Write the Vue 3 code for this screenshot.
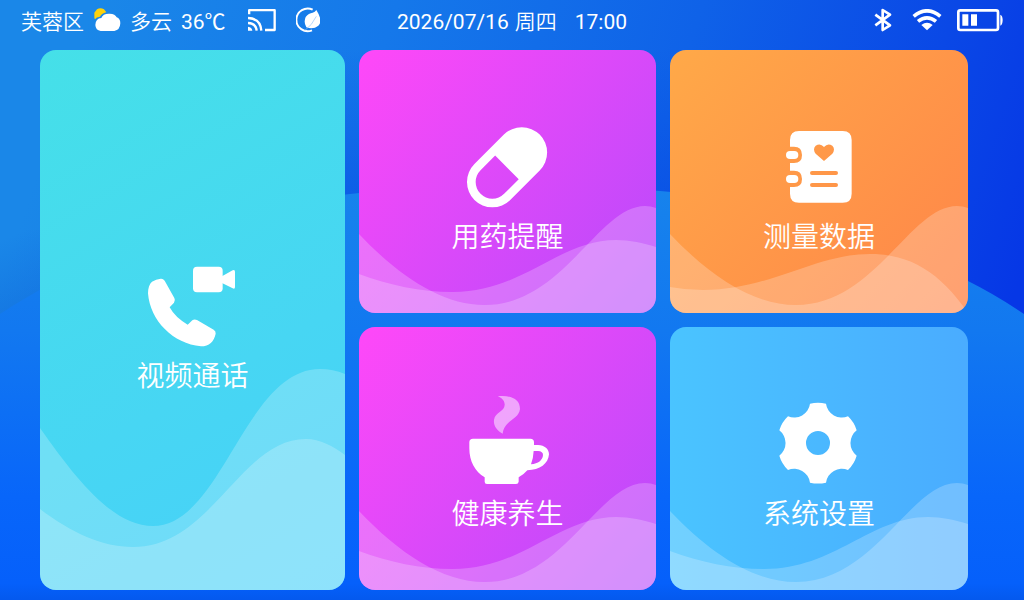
<script setup>
const steep = 'M0 184 C40 226 83 255 126 255 C205 255 240 156 287 156 Q293 156 298 158 V263 H0Z'
const shallow = 'M0 224 C30 235 62 242 94 242 C165 242 200 190 258 190 C272 190 285 193 298 197 V263 H0Z'

const cards = [
  {
    id: 'call',
    label: '视频通话',
    icon: '51 -14 333 333',
    size: '0 0 305 540',
    waves: [
      'M0 378 C40 435 75 476 113 476 C182 476 205 319 280 319 Q293 319 305 324 V540 H0Z',
      'M0 459 C32 483 62 497 93 497 C172 497 200 389 266 389 C280 389 293 396 305 405 V540 H0Z',
    ],
  },
  { id: 'medicine', label: '用药提醒', icon: '66 -11 333 333', size: '0 0 298 263', waves: [steep, shallow] },
  {
    id: 'data',
    label: '测量数据',
    icon: '42 -9 333 333',
    size: '0 0 298 263',
    waves: [steep, 'M0 237 Q16 240 33 240 C100 240 145 204 200 204 C240 204 270 222 298 263 H0Z'],
  },
  { id: 'health', label: '健康养生', icon: '66 -3 333 333', size: '0 0 298 263', waves: [steep, shallow] },
  { id: 'settings', label: '系统设置', icon: '42 -3 333 333', size: '0 0 298 263', waves: [steep, shallow] },
]
</script>

<template>
  <div class="screen">
    <svg class="backdrop" viewBox="0 0 1024 600" preserveAspectRatio="none" aria-hidden="true">
      <defs>
        <linearGradient id="sky" gradientUnits="userSpaceOnUse" x1="80" y1="40" x2="1000" y2="340">
          <stop offset="0" stop-color="#1a87e8" />
          <stop offset="0.3" stop-color="#1578ea" />
          <stop offset="0.6" stop-color="#0f62e8" />
          <stop offset="0.85" stop-color="#0a48e6" />
          <stop offset="1" stop-color="#0637e6" />
        </linearGradient>
        <linearGradient id="hill" x1="0" y1="0" x2="0" y2="1">
          <stop offset="0" stop-color="#1783ec" />
          <stop offset="0.35" stop-color="#1278f0" />
          <stop offset="0.75" stop-color="#0866fa" />
          <stop offset="0.96" stop-color="#0560fb" />
          <stop offset="1" stop-color="#0459ee" />
        </linearGradient>
        <linearGradient id="shade" gradientUnits="userSpaceOnUse" x1="0" y1="240" x2="30" y2="315">
          <stop offset="0" stop-color="#0d5fd8" stop-opacity="0" />
          <stop offset="1" stop-color="#0d5fd8" stop-opacity="0.4" />
        </linearGradient>
        <linearGradient id="dip" x1="0" y1="0" x2="0" y2="1">
          <stop offset="0" stop-color="#084ce4" stop-opacity="0" />
          <stop offset="1" stop-color="#084ce4" stop-opacity="0.6" />
        </linearGradient>
      </defs>
      <rect width="1024" height="600" fill="url(#sky)" />
      <path d="M0 230 H345 V320 H0Z" fill="url(#shade)" />
      <path d="M300 50 H700 V200 H300Z" fill="url(#dip)" />
      <path d="M0 314 C120 236 240 205 350 194 C450 184 570 184 660 191 C780 200 860 222 968 281 Q996 295 1024 314 V600 H0Z" fill="url(#hill)" />
    </svg>

    <header class="status">
      <div class="group left">
        <span class="han">芙蓉区</span>
        <svg class="cloud" width="27" height="24" viewBox="281 24 81 72" aria-hidden="true">
          <path d="M282 54V38L290 28Q300 21 311 28L318 37Q303 41 299 50Q288 51 284 58Z" fill="#fdd20a" />
          <path d="M301 93Q286 91 285 75Q286 55 303 54Q308 40 328 41Q345 42 349 52Q360 56 360 70Q359 90 342 93Z" fill="#fff" />
        </svg>
        <span class="han">多云</span>
        <span class="temp">36℃</span>
        <svg class="cast" width="28" height="24" viewBox="744 25 84 72" fill="none" stroke="#fff" stroke-width="7" aria-hidden="true">
          <path d="M747.500 44V31.500H824V91H795M744 55Q782 57 784 93M744 70Q768 71 770 93" stroke-linejoin="round" />
          <path d="M744 81Q756 83 757 93H744Z" fill="#fff" stroke="none" />
        </svg>
        <svg class="eco" width="24" height="26" viewBox="888 22 72 78" fill="none" stroke="#fff" aria-hidden="true">
          <path d="M938 30A34 34 0 1 0 936 92" stroke-width="6" />
          <path d="M949 31Q970 64 955 78Q940 90 919 83Q910 68 917 52Q926 40 938 39Q945 38 949 31Z" fill="#fff" stroke="none" />
          <path d="M914 93Q936 77 949 50" stroke="#8fc0f8" stroke-width="2" />
        </svg>
      </div>
      <time class="clock" datetime="2026-07-16T17:00">
        <span>2026/07/16</span>
        <span class="han weekday">周四</span>
        <span>17:00</span>
      </time>
      <div class="group right">
        <svg width="20" height="26" viewBox="69 21 60 78" fill="none" stroke="#fff" stroke-width="8" aria-hidden="true">
          <path d="M76 44L120 76L98 90V30L120 44L76 76" stroke-linejoin="round" />
        </svg>
        <svg class="wifi" width="30" height="22" viewBox="186 27 90 66" fill="none" stroke="#fff" stroke-width="11" aria-hidden="true">
          <path d="M191 49Q231 16 271 49M204 64Q231 43 258 64" />
          <path d="M214 75Q231 61 248 75L231 91Z" fill="#fff" stroke="none" />
        </svg>
        <svg class="battery" width="46" height="24" viewBox="321 24 138 72" fill="none" stroke="#fff" aria-hidden="true">
          <rect x="325" y="31" width="119" height="59" rx="6" stroke-width="8" />
          <path d="M337 43H355V77H337ZM363 43H381V77H363Z" fill="#fff" stroke="none" />
          <path d="M451 44Q458 47 458 60Q458 74 451 77Z" fill="#fff" stroke="none" />
        </svg>
      </div>
    </header>

    <main class="tiles">
      <button v-for="card in cards" :key="card.id" type="button" class="tile" :class="card.id">
        <svg class="waves" :viewBox="card.size" preserveAspectRatio="none" aria-hidden="true">
          <path v-for="(wave, i) in card.waves" :key="i" :d="wave" />
        </svg>
        <svg class="icon" :viewBox="card.icon" fill="#fff" aria-hidden="true">
          <template v-if="card.id === 'call'">
            <path d="M96 93Q108 85 122 84Q129 83 134 90L163 142Q167 149 162 156L149 170Q165 200 203 222L217 209Q223 204 231 208L281 237Q288 241 287 249C282 272 268 287 243 287C160 280 90 210 84 128C84 112 88 100 96 93Z" />
            <rect x="219" y="48" width="89" height="77" rx="12" />
            <path d="M306 77L338 59Q345 56 345 63V109Q345 116 338 113L306 97Z" />
          </template>
          <g v-else-if="card.id === 'medicine'" transform="translate(187 214) rotate(-45)">
            <path fill-rule="evenodd" d="M0-76H125A76 76 0 0 1 125 76H0A76 76 0 0 1 0-76ZM62-50H0A50 50 0 0 0 0 50H62Z" />
          </g>
          <template v-else-if="card.id === 'data'">
            <path fill-rule="evenodd" d="M147 63H278Q305 63 305 90V251Q305 278 278 278H147Q120 278 120 251V231H132Q156 231 156 207Q156 182 132 182H120V159H132Q156 159 156 135Q156 110 132 110H120V90Q120 63 147 63ZM222 153L197 131Q187 117 197 107Q211 98 222 111Q233 98 247 107Q257 117 247 131ZM186 183A6 6 0 0 0 186 195H258A6 6 0 0 0 258 183ZM186 219A6 6 0 0 0 186 231H258A6 6 0 0 0 258 219Z" />
            <rect x="108" y="123" width="37" height="24" rx="12" />
            <rect x="108" y="195" width="37" height="24" rx="12" />
          </template>
          <template v-else-if="card.id === 'health'">
            <path opacity="0.5" d="M203 34C240 30 270 40 270 72C266 105 222 105 218 146C200 135 190 122 192 105C195 80 225 80 224 58C223 45 214 38 203 34Z" />
            <path fill-rule="evenodd" d="M118 172Q118 161 129 161H301Q312 161 312 172V180H324C344 181 357 192 357 208C355 236 330 255 292 256Q280 270 266 277V290Q265 297 258 297H171Q164 297 164 290V277C135 260 118 230 118 190ZM311 198H324Q339 199 339 210C338 226 325 236 303 238Q310 220 311 198Z" />
          </template>
          <path v-else fill-rule="evenodd" d="M180 56Q204 51 228 56A48 48 0 0 0 294 94Q313 112 320 136A48 48 0 0 0 320 212Q313 236 294 255A48 48 0 0 0 228 293Q204 298 180 293A48 48 0 0 0 114 255Q95 236 88 212A48 48 0 0 0 88 136Q95 112 114 94A48 48 0 0 0 180 56ZM204 138A36 36 0 1 0 204 210A36 36 0 1 0 204 138Z" />
        </svg>
        <span class="label han">{{ card.label }}</span>
      </button>
    </main>
  </div>
</template>

<style>
body {
  margin: 0;
}
</style>

<style scoped>
.screen {
  position: relative;
  isolation: isolate;
  box-sizing: border-box;
  min-height: 100vh;
  display: flex;
  flex-direction: column;
  color: #fff;
  font-family: Roboto, "Noto Sans CJK SC", sans-serif;
}
.han {
  font-weight: 350;
}
.backdrop {
  position: absolute;
  inset: 0;
  z-index: -1;
  width: 100%;
  height: 100%;
}
.status {
  display: grid;
  grid-template-columns: 1fr auto 1fr;
  align-items: center;
  height: 44px;
  padding: 0 21px;
  font-size: 21px;
  line-height: 32px;
}
.group {
  display: flex;
  align-items: center;
}
.group svg {
  flex: none;
}
.cloud {
  margin: 0 9px 4px 10px;
}
.temp {
  margin-left: 9px;
}
.cast {
  margin: 0 20px 4px 22px;
}
.eco {
  margin-bottom: 4px;
}
.clock {
  display: flex;
  align-items: baseline;
}
.weekday {
  margin: 0 18px 0 6px;
}
.right {
  justify-content: flex-end;
  padding-bottom: 4px;
}
.wifi {
  margin: 0 15px 0 19px;
}
.tiles {
  flex: 1;
  display: grid;
  grid-template-columns: 305fr 297fr 298fr;
  grid-template-rows: 1fr 1fr;
  gap: 14px;
  padding: 6px 56px 10px 40px;
}
.tile {
  position: relative;
  display: flex;
  flex-direction: column;
  align-items: center;
  justify-content: center;
  overflow: hidden;
  padding: 2px 0 0;
  border: 0;
  border-radius: 16px;
  color: inherit;
  font: inherit;
  cursor: pointer;
}
.call {
  grid-row: span 2;
  background: linear-gradient(150deg, #45e0e8, #47d6f3 60%, #47d0fa);
}
.medicine,
.health {
  background: linear-gradient(132deg, #ff48f8, #b64afb);
}
.data {
  background: linear-gradient(132deg, #ffa948, #ff8549);
}
.settings {
  background: linear-gradient(90deg, #4ac4ff, #4aacff);
}
.waves {
  position: absolute;
  inset: 0;
  width: 100%;
  height: 100%;
}
.waves path {
  fill: #fff;
  fill-opacity: 0.22;
}
.icon {
  position: relative;
  width: 111px;
  height: 111px;
}
.label {
  position: relative;
  font-size: 28px;
  line-height: 40px;
}
</style>
